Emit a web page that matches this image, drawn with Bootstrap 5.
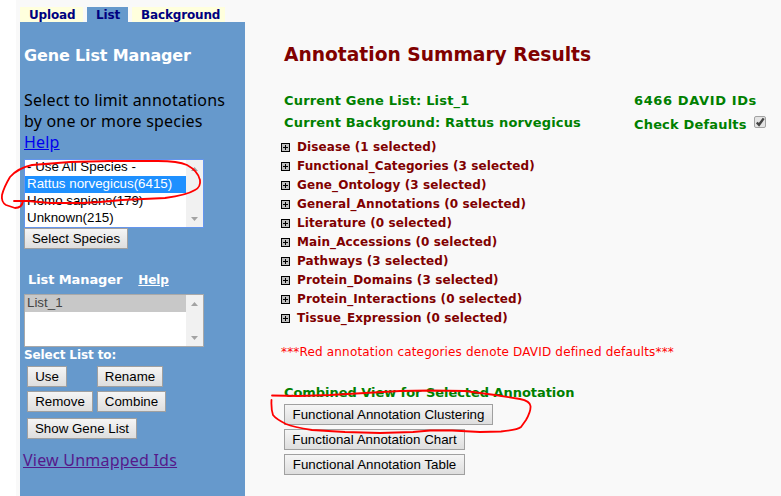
<!DOCTYPE html>
<html lang="en">
<head>
<meta charset="utf-8">
<title>Annotation Summary Results</title>
<link href="https://cdn.jsdelivr.net/npm/bootstrap@5.3.0/dist/css/bootstrap.min.css" rel="stylesheet">
<style>
html, body { height: 496px; overflow: hidden; }
body { background: #fff; padding-left: 16px; font: 13px/19px "DejaVu Sans", sans-serif; color: #000; }
.page { background: #f9f9f9; height: 496px; padding-left: 4px; }
.sidebar { width: 225px; padding-top: 7px; }
.tabs { height: 15px; gap: 4px; }
.tab-item { background: #ffd; color: #000080; font: bold 12px/16px "DejaVu Sans", sans-serif; letter-spacing: -.15px; text-decoration: none; padding-left: 9px; white-space: nowrap; }
.tab-item.current { background: #69c; }
.tab-upload { width: 63px; } .tab-list { width: 41px; } .tab-bg { width: 93px; }
.panel { background: #69c; height: 474px; padding-left: 4px; }
.panel-title { font-size: 16px; line-height: 20px; font-weight: bold; letter-spacing: -.15px; color: #fff; padding-top: 24px; margin: 0 0 24px; }
.intro { font: 16px/21px "Noto Sans", sans-serif; letter-spacing: .2px; height: 69px; white-space: nowrap; margin: 0; }
.intro a { color: #00e; }
.picker { width: 180px; background: #fff; border: 1px solid #a9a9a9; font: 13.33px/16px "Liberation Sans", sans-serif; }
.picker.focused { border-color: #6495ed; }
.opt { padding-left: 2px; height: 17px; white-space: nowrap; }
.opt.sel { background: #1e90ff; color: #fff; }
.opt.dim { background: #c8c8c8; color: #444; }
.track { width: 17px; background: #f1f1f1; padding: 7px 0 6px; }
.species-box { height: 69px; }
.species-box .first { height: 16px; line-height: 14px; }
.list-box { height: 53px; }
.key { font: 13.33px/19px "Liberation Sans", sans-serif; height: 21px; padding: 0; border: 1px solid #a0a0a0; border-radius: 0; color: #000; background: linear-gradient(#f5f5f5, #dedede); text-align: center; white-space: nowrap; }
.w-species { width: 104px; } .w-use { width: 40px; } .w-rename { width: 66px; } .w-combine { width: 69px; } .w-show { width: 110px; }
.w-cluster { width: 209px; } .w-chart { width: 181px; }
.manager-head { padding: 21px 0 4px 4px; gap: 16px; font-weight: bold; color: #fff; line-height: 20px; letter-spacing: -.1px; }
.manager-head a { color: #fff; font-size: 12px; }
.select-to { font: bold 12px/16px "DejaVu Sans", sans-serif; letter-spacing: -.1px; color: #fff; height: 19px; }
.actions { display: grid; grid-template-columns: 66px 69px; column-gap: 4px; row-gap: 4px; padding-left: 3px; }
.unmapped { font: 16px/22px "Noto Sans", sans-serif; letter-spacing: .22px; color: #551a8b; display: block; margin: 10px 0 0 -1px; }
.results { padding: 43px 0 0 39px; }
.results-title { font-size: 18.67px; font-weight: bold; line-height: 24px; color: #800000; margin: 0; }
.facts { color: #008000; font-weight: bold; letter-spacing: .17px; line-height: 22px; padding-top: 23px; }
.facts-left { width: 350px; }
.david { letter-spacing: .62px; }
.defaults { line-height: 26px; }
.tick { margin-left: 6px; }
.cats { list-style: none; margin: 0 0 0 -3px; padding: 0; color: #800000; font: bold 12px/19px "DejaVu Sans", sans-serif; letter-spacing: .1px; }
.cats li { gap: 7px; height: 19px; }
.note { color: #f00; font-size: 12px; letter-spacing: .17px; margin: 15px 0 0 -3px; white-space: nowrap; }
.combined { color: #008000; font-weight: bold; letter-spacing: -.05px; margin-top: 21px; height: 21px; }
.show-row { margin-top: 2px; }
.ink { position: absolute; left: 0; top: 0; pointer-events: none; }
</style>
</head>
<body>
<div class="page d-flex align-items-start">
  <aside class="sidebar flex-shrink-0">
    <nav class="tabs d-flex">
      <a class="tab-item tab-upload" href="#">Upload</a>
      <a class="tab-item tab-list current" href="#">List</a>
      <a class="tab-item tab-bg" href="#">Background</a>
    </nav>
    <div class="panel">
      <h2 class="panel-title">Gene List Manager</h2>
      <p class="intro">Select to limit annotations<br>by one or more species<br><a href="#">Help</a></p>
      <div class="picker focused species-box d-flex">
        <div class="flex-grow-1 overflow-hidden">
          <div class="opt first">- Use All Species -</div>
          <div class="opt sel">Rattus norvegicus(6415)</div>
          <div class="opt">Homo sapiens(179)</div>
          <div class="opt">Unknown(215)</div>
        </div>
        <div class="track d-flex flex-column align-items-center justify-content-between">
          <svg width="7" height="4"><path d="M0 4L3.5 0 7 4z" fill="#a3a3a3"/></svg>
          <svg width="7" height="4"><path d="M0 0L3.5 4 7 0z" fill="#a3a3a3"/></svg>
        </div>
      </div>
      <button class="key w-species d-block">Select Species</button>
      <div class="manager-head d-flex"><span>List Manager</span><a href="#">Help</a></div>
      <div class="picker list-box d-flex">
        <div class="flex-grow-1"><div class="opt dim">List_1</div></div>
        <div class="track d-flex flex-column align-items-center justify-content-between">
          <svg width="7" height="4"><path d="M0 4L3.5 0 7 4z" fill="#a3a3a3"/></svg>
          <svg width="7" height="4"><path d="M0 0L3.5 4 7 0z" fill="#a3a3a3"/></svg>
        </div>
      </div>
      <div class="select-to">Select List to:</div>
      <div class="actions">
        <button class="key w-use">Use</button><button class="key w-rename">Rename</button>
        <button class="key w-rename">Remove</button><button class="key w-combine">Combine</button>
        <button class="key w-show show-row">Show Gene List</button>
      </div>
      <a class="unmapped" href="#">View Unmapped Ids</a>
    </div>
  </aside>
  <main class="results flex-grow-1">
    <h1 class="results-title">Annotation Summary Results</h1>
    <div class="facts d-flex">
      <div class="facts-left"><div>Current Gene List: List_1</div><div>Current Background: Rattus norvegicus</div></div>
      <div>
        <div class="david">6466 DAVID IDs</div>
        <div class="defaults d-flex"><span>Check Defaults</span>
          <svg class="tick" width="13" height="18"><rect x="1.500" y="4.500" width="11" height="11" rx="1.500" fill="#e4e4e4" stroke="#a2a2a2"/><path d="M3.800 10.500L6 12.800 10.700 6.400" fill="none" stroke="#444" stroke-width="2.400"/></svg>
        </div>
      </div>
    </div>
    <ul class="cats" id="cats"></ul>
    <p class="note">***Red annotation categories denote DAVID defined defaults***</p>
    <div class="combined">Combined View for Selected Annotation</div>
    <div class="d-flex flex-column gap-1 align-items-start">
      <button class="key w-cluster">Functional Annotation Clustering</button>
      <button class="key w-chart">Functional Annotation Chart</button>
      <button class="key w-chart">Functional Annotation Table</button>
    </div>
  </main>
</div>
<svg class="ink" width="781" height="496" fill="none" stroke="#f00" stroke-width="1.8" stroke-linecap="round" stroke-linejoin="round">
  <path d="M14 201L28 201 50 203 82 203 100 202 122 200 165 198Q187 195 195 190 201 187 200 180 198 171 187 165 178 161 158 161L110 161 70 162 32 165Q18 168 10 177 4 187 2 195 1 202 6 205L15 208Q22 208 23 201"/>
  <path d="M272 395.500L299 396 330 395 365 393 400 391 430 390.500 465 391 495 395 520 399Q530 401 530.500 406 531 411 526 420L521 427Q517 430 501 431.500L480 432 452 430.500 430 430.500 413 432 380 433 345 432 312 430Q293 427 286 424 276 419 273 415 271 409 271.500 400"/>
</svg>
<script>
const categories = [["Disease", 1], ["Functional_Categories", 3], ["Gene_Ontology", 3], ["General_Annotations", 0], ["Literature", 0], ["Main_Accessions", 0], ["Pathways", 3], ["Protein_Domains", 3], ["Protein_Interactions", 0], ["Tissue_Expression", 0]];
document.getElementById("cats").innerHTML = categories.map(([name, n]) =>
  `<li class="d-flex align-items-center"><svg width="9" height="9" shape-rendering="crispEdges"><rect x=".5" y=".5" width="8" height="8" fill="#c0c0c0" stroke="#000"/><path d="M2 4.500h5M4.500 2v5" stroke="#000"/></svg><span>${name} (${n} selected)</span></li>`).join("");
</script>
<script src="https://cdn.jsdelivr.net/npm/bootstrap@5.3.0/dist/js/bootstrap.bundle.min.js"></script>
</body>
</html>
